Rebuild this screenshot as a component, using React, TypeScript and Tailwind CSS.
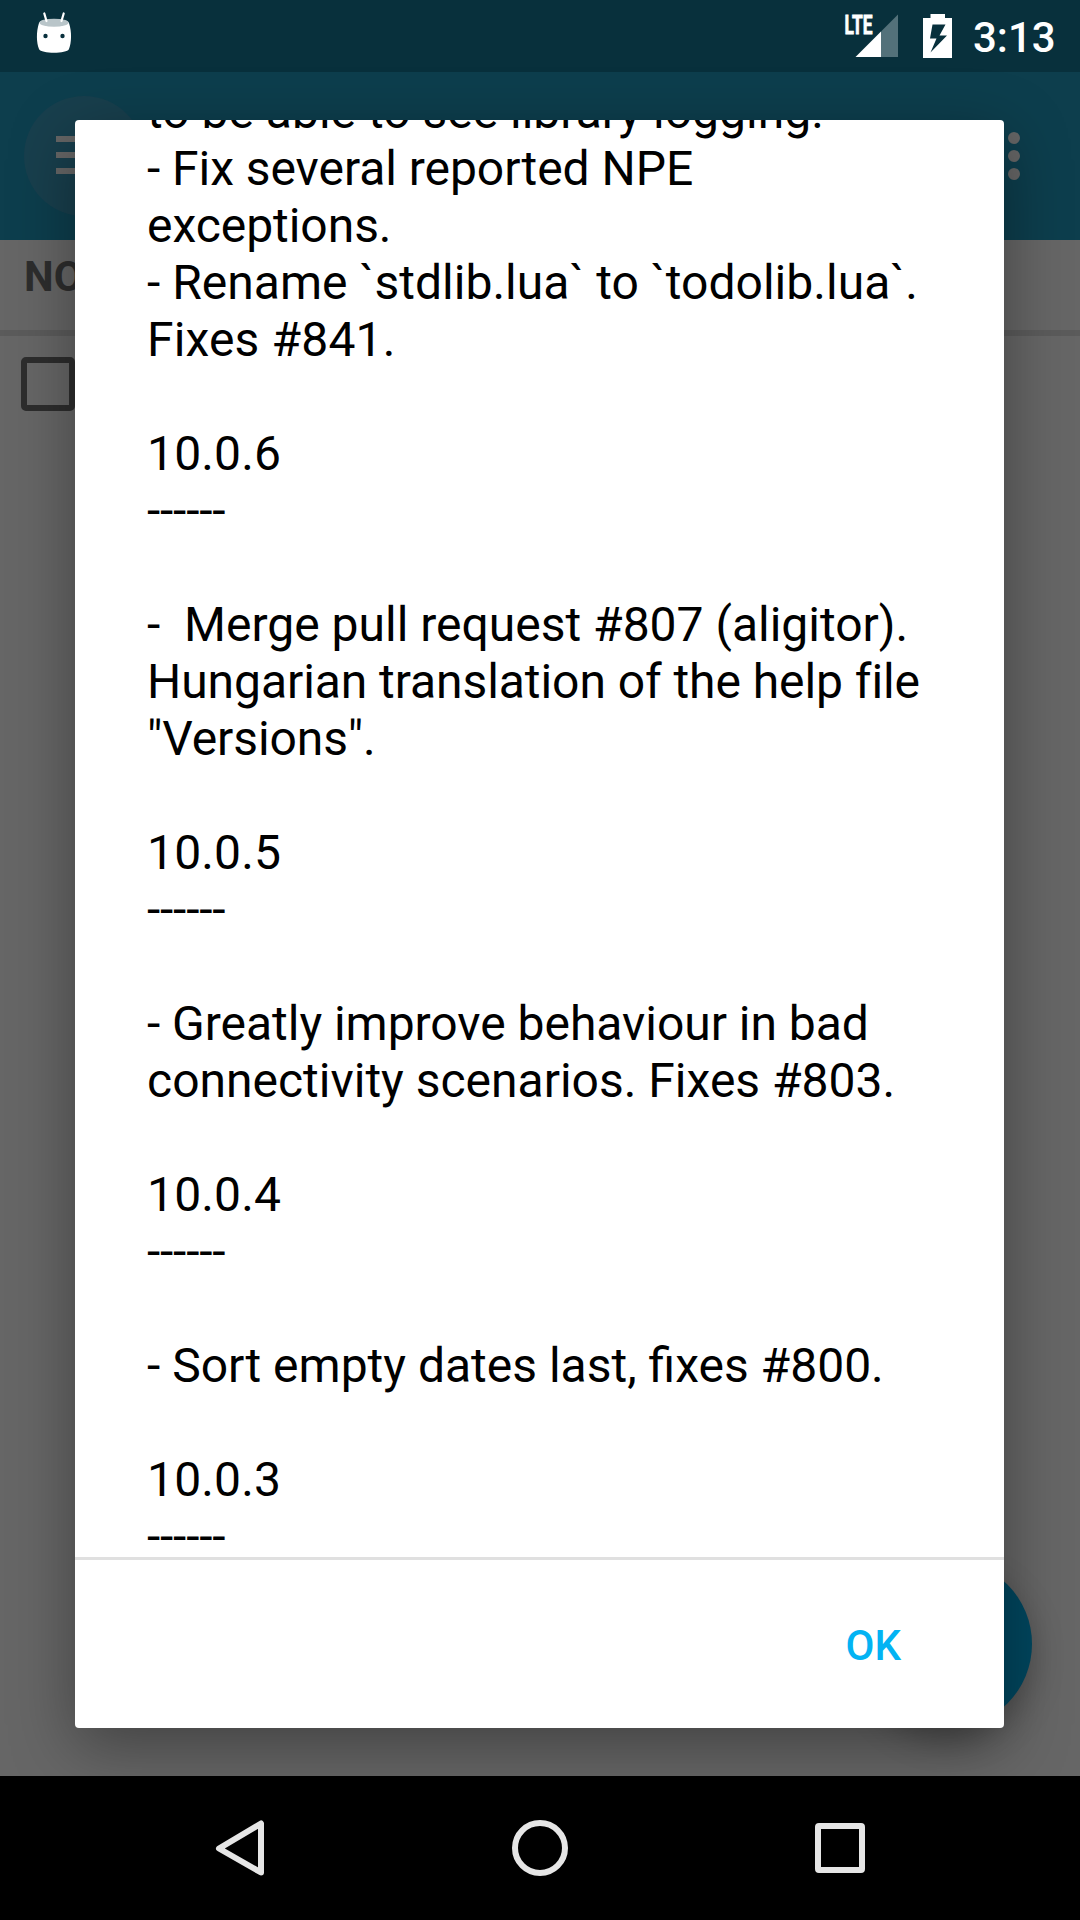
type Line = { text: string; className?: string };

const DASHES: Line = { text: "------", className: "tracking-[-0.22px]" };

const CHANGELOG: Line[] = [
  { text: "to be able to see library logging." },
  { text: "- Fix several reported NPE", className: "tracking-[-0.05px]" },
  { text: "exceptions.", className: "tracking-[-0.05px]" },
  { text: "- Rename `stdlib.lua` to `todolib.lua`.", className: "tracking-[0.03px]" },
  { text: "Fixes #841.", className: "tracking-[0.15px]" },
  { text: "" },
  { text: "10.0.6", className: "tracking-[0.15px]" },
  DASHES,
  { text: "" },
  { text: "-  Merge pull request #807 (aligitor)." },
  { text: "Hungarian translation of the help file", className: "tracking-[-0.065px]" },
  { text: '"Versions".', className: "tracking-[-0.1px]" },
  { text: "" },
  { text: "10.0.5", className: "tracking-[0.15px]" },
  DASHES,
  { text: "" },
  { text: "- Greatly improve behaviour in bad", className: "tracking-[-0.03px]" },
  { text: "connectivity scenarios. Fixes #803." },
  { text: "" },
  { text: "10.0.4", className: "tracking-[0.15px]" },
  DASHES,
  { text: "" },
  { text: "- Sort empty dates last, fixes #800." },
  { text: "" },
  { text: "10.0.3", className: "tracking-[0.15px]" },
  DASHES,
];

function StatusBar() {
  return (
    <header className="flex h-[72px] shrink-0 items-start bg-[#08303c] text-white">
      <svg className="ml-9 mt-3 h-[42px] w-9" viewBox="36 12 36 42">
        <path d="M39 23C42 18 66 18 69 23C72 32 71.500 43 69 49C67 54 41 54 39 49C36.500 43 36 32 39 23Z" fill="#fff" />
        <ellipse cx="54" cy="22.700" rx="14.600" ry="4" fill="#b9c5c9" />
        <path d="M44.3 13.5 46.5 21M63.7 13.5 61.5 21" stroke="#fff" strokeWidth="2.2" strokeLinecap="round" />
        <circle cx="45.500" cy="36" r="2.200" fill="#08303c" />
        <circle cx="62.500" cy="36" r="2.200" fill="#08303c" />
      </svg>
      <svg className="ml-auto mt-3 h-12 w-[58px] overflow-visible" viewBox="842 12 58 48">
        <text
          x="844.5"
          y="33.5"
          textLength="28"
          lengthAdjust="spacingAndGlyphs"
          fill="#fff"
          stroke="#fff"
          strokeWidth="0.8"
          className="font-['Roboto'] text-[26px] font-bold"
        >
          LTE
        </text>
        <path d="M898 14.500V57H881V31.500Z" fill="#53717a" />
        <path d="M881 31.500V57H855.500Z" fill="#fff" />
      </svg>
      <svg className="ml-[21px] mt-3 h-12 w-8" viewBox="921 12 32 48">
        <path
          fill="#fff"
          fillRule="evenodd"
          d="M930.500 14H945V18H952V58H923V18H930.500ZM932.500 24.500 930 38.500H936.500L930.500 52.500 947 35.500H939.500L945.500 24.500Z"
        />
      </svg>
      <time className="ml-5 mr-6 mt-[13px] w-[83px] whitespace-nowrap text-[42px] font-medium leading-[50px]">3:13</time>
    </header>
  );
}

function AppBar() {
  return (
    <div className="flex h-[168px] shrink-0 items-start justify-between bg-[#0d3e4d] pl-6 pr-[60px] pt-6">
      <div className="flex size-[120px] flex-col items-start gap-2.5 rounded-full bg-[#183f4d] pl-8 pt-10">
        <span className="h-1.5 w-12 bg-[#666]" />
        <span className="h-1.5 w-12 bg-[#666]" />
        <span className="h-1.5 w-12 bg-[#666]" />
      </div>
      <div className="flex flex-col gap-1.5 pt-9">
        <span className="size-3 rounded-full bg-[#666]" />
        <span className="size-3 rounded-full bg-[#666]" />
        <span className="size-3 rounded-full bg-[#666]" />
      </div>
    </div>
  );
}

function TaskList() {
  return (
    <main className="relative flex-1 overflow-hidden bg-[#666]">
      <h2 className="h-[90px] pl-6 pt-3 text-[42px] font-bold leading-[50px] text-[#2d2d2d]">NO</h2>
      <div className="h-1.5 bg-[#5b5b5b]" />
      <div className="ml-[21px] mt-[21px] size-[54px] rounded-[5px] border-6 border-[#2d2d2d]" />
      <div className="absolute bottom-12 right-12 size-[168px] rounded-full bg-[#00465e] shadow-[0_12px_32px_rgba(0,0,0,0.25)]" />
    </main>
  );
}

function NavigationBar() {
  return (
    <nav className="relative z-20 flex h-36 shrink-0 items-center bg-black pl-[210px] text-[#e6e6e6]">
      <svg className="size-15" viewBox="0 0 60 60" fill="none" stroke="currentColor" strokeWidth="6" strokeLinejoin="round">
        <path d="M51 5.500V54.500L9 30.500Z" />
      </svg>
      <div className="ml-[242px] size-14 rounded-full border-6 border-current" />
      <div className="ml-[247px] size-[50px] rounded-[4px] border-6 border-current" />
    </nav>
  );
}

function ChangelogDialog() {
  return (
    <section
      role="dialog"
      className="absolute left-[75px] top-[120px] z-10 flex h-[1608px] w-[929px] flex-col rounded-[4px] bg-white shadow-[0_18px_64px_rgba(0,0,0,0.36)]"
    >
      <div className="h-[1437px] overflow-hidden px-[72px]">
        <div className="-mt-[37px] whitespace-pre text-[48px] leading-[57px] text-black">
          {CHANGELOG.map((line, i) => (
            <p key={i} className={line.className}>
              {line.text || " "}
            </p>
          ))}
        </div>
      </div>
      <div className="flex flex-1 items-start justify-end border-t-3 border-[#e0e0e0] pr-[103px] pt-[61px]">
        <button className="text-[42px] font-medium leading-[50px] text-[#03b3f3]">OK</button>
      </div>
    </section>
  );
}

export default function App() {
  return (
    <div className="relative flex h-[1920px] w-[1080px] flex-col overflow-hidden font-['Roboto',sans-serif]">
      <StatusBar />
      <AppBar />
      <TaskList />
      <NavigationBar />
      <ChangelogDialog />
    </div>
  );
}
